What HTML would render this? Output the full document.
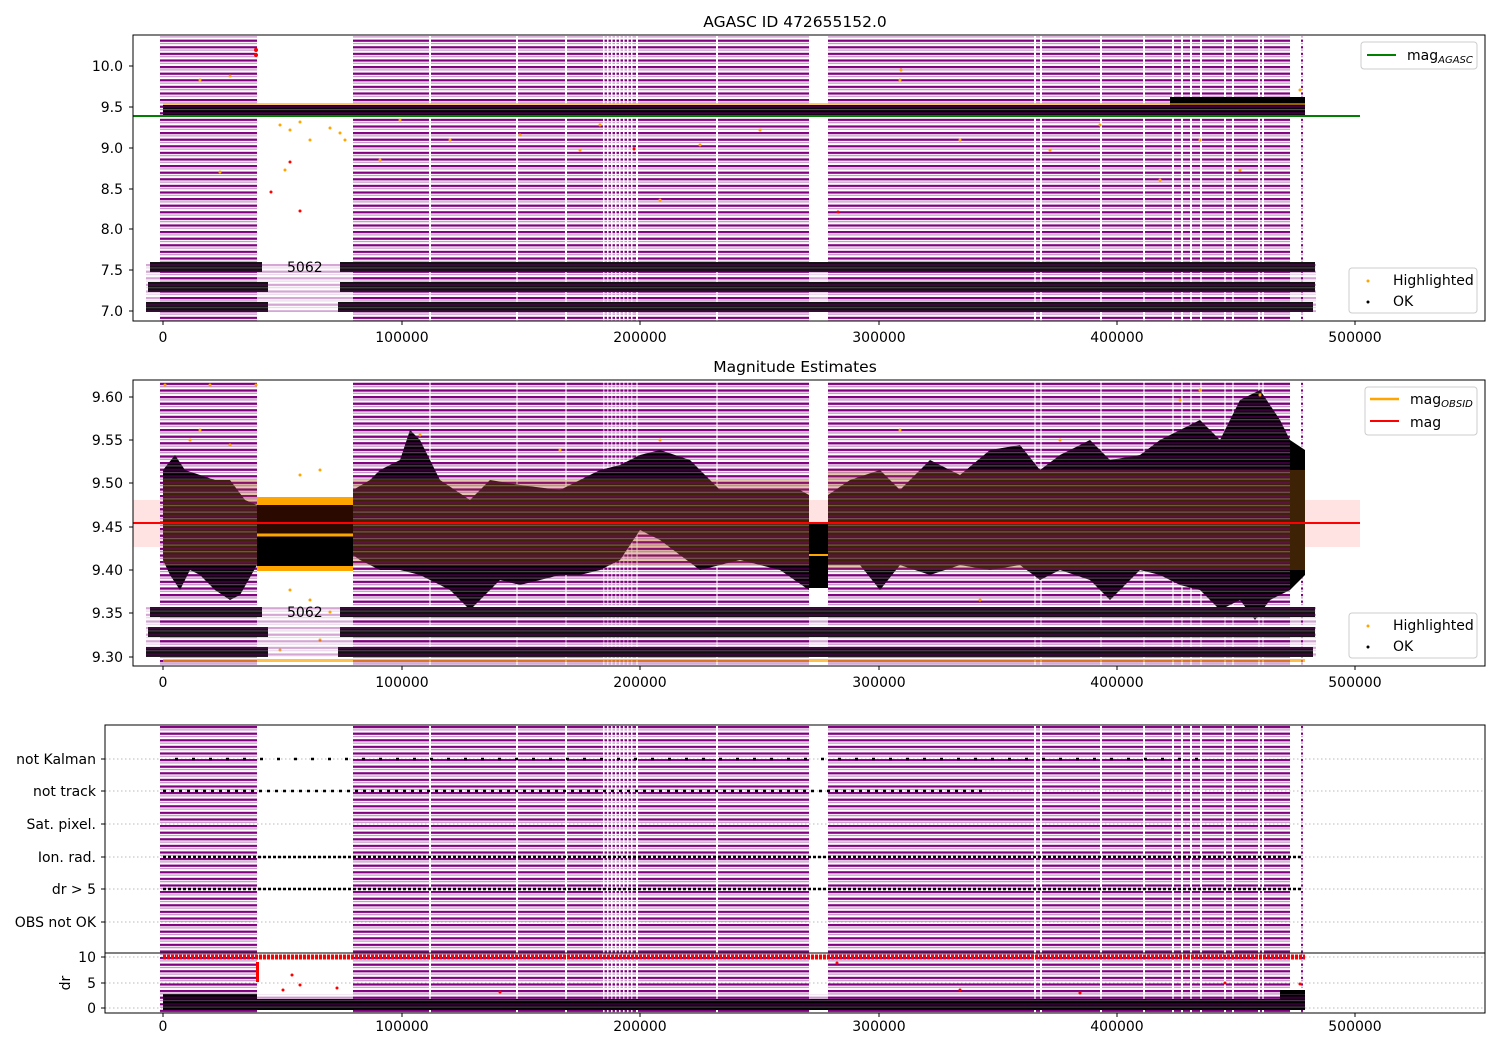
<!DOCTYPE html>
<html><head><meta charset="utf-8"><style>
html,body{margin:0;padding:0;background:#fff;}
svg{display:block;font-family:"DejaVu Sans","Liberation Sans",sans-serif;}
</style></head><body>
<svg width="1500" height="1050" viewBox="0 0 1500 1050" xmlns="http://www.w3.org/2000/svg">
<defs>
<pattern id="st" x="0" y="0" width="8" height="6.6" patternUnits="userSpaceOnUse">
<rect x="0" y="0" width="8" height="2.2" fill="#800080"/>
<rect x="0" y="3.3" width="8" height="1.2" fill="#c690c6"/>
</pattern>
<g id="gaps" fill="#fff">
<rect x="429" width="2" height="300"/><rect x="516" width="2" height="300"/><rect x="565" width="2" height="300"/>
<rect x="603" width="1.5" height="300"/><rect x="607" width="1.5" height="300"/><rect x="611" width="1.5" height="300"/><rect x="615" width="1.5" height="300"/><rect x="619" width="1.5" height="300"/><rect x="623" width="1.5" height="300"/><rect x="627" width="1.5" height="300"/><rect x="631" width="1.5" height="300"/>
<rect x="636" width="2" height="300"/><rect x="716" width="2" height="300"/><rect x="1034" width="2" height="300"/><rect x="1040" width="2" height="300"/><rect x="1100" width="2" height="300"/><rect x="1143" width="2" height="300"/><rect x="1172" width="2" height="300"/><rect x="1181" width="2" height="300"/><rect x="1190" width="2" height="300"/><rect x="1200" width="2" height="300"/><rect x="1224" width="2" height="300"/><rect x="1232" width="2" height="300"/><rect x="1258" width="2" height="300"/><rect x="1262" width="2" height="300"/>
</g>
</defs>

<!-- ============ PANEL 1 ============ -->
<text x="795" y="27" font-size="15.5" text-anchor="middle">AGASC ID 472655152.0</text>
<rect x="160" y="36" width="97" height="285" fill="url(#st)"/>
<rect x="353" y="36" width="456" height="285" fill="url(#st)"/>
<rect x="828" y="36" width="462" height="285" fill="url(#st)"/>
<rect x="1301" y="36" width="2" height="285" fill="url(#st)"/>
<use href="#gaps" y="36" transform="translate(0,0)" />
<!-- data top -->
<rect x="163" y="105" width="1142" height="10" fill="#000"/>
<rect x="1170" y="97" width="135" height="18" fill="#000"/>
<rect x="163" y="103" width="1142" height="2" fill="#ffa500" opacity="0.6"/>
<rect x="163" y="104" width="1142" height="12" fill="url(#st)" opacity="0.5"/>
<g fill="#ffa500">
<circle cx="200" cy="80" r="1.5"/><circle cx="230" cy="76" r="1.5"/><circle cx="280" cy="125" r="1.5"/><circle cx="290" cy="130" r="1.5"/><circle cx="300" cy="122" r="1.5"/>
<circle cx="310" cy="140" r="1.5"/><circle cx="285" cy="170" r="1.5"/><circle cx="330" cy="128" r="1.5"/><circle cx="340" cy="133" r="1.5"/><circle cx="345" cy="140" r="1.5"/>
<circle cx="380" cy="160" r="1.5"/><circle cx="450" cy="140" r="1.5"/><circle cx="520" cy="135" r="1.5"/><circle cx="580" cy="150" r="1.5"/><circle cx="600" cy="125" r="1.5"/>
<circle cx="660" cy="200" r="1.5"/><circle cx="700" cy="145" r="1.5"/><circle cx="760" cy="130" r="1.5"/><circle cx="900" cy="80" r="1.5"/><circle cx="901" cy="70" r="1.5"/>
<circle cx="960" cy="140" r="1.5"/><circle cx="1050" cy="150" r="1.5"/><circle cx="1100" cy="125" r="1.5"/><circle cx="1160" cy="180" r="1.5"/><circle cx="1200" cy="140" r="1.5"/><circle cx="1240" cy="170" r="1.5"/>
<circle cx="220" cy="172" r="1.5"/><circle cx="400" cy="120" r="1.5"/><circle cx="1300" cy="90" r="1.5"/>
</g>
<g fill="#f00">
<circle cx="256" cy="50" r="2"/><circle cx="256" cy="55" r="2"/><circle cx="271" cy="192" r="1.5"/><circle cx="290" cy="162" r="1.5"/><circle cx="300" cy="211" r="1.5"/><circle cx="838" cy="212" r="1.5"/><circle cx="634" cy="149" r="1.5"/>
</g>
<line x1="133" y1="116" x2="1360" y2="116" stroke="#008000" stroke-width="2"/>
<g fill="#111">
<rect x="150" y="262" width="112" height="10"/><rect x="340" y="262" width="975" height="10"/>
<rect x="148" y="282" width="120" height="10"/><rect x="340" y="282" width="975" height="10"/>
<rect x="146" y="302" width="122" height="10"/><rect x="338" y="302" width="975" height="10"/>
</g>
<rect x="146" y="262" width="1170" height="50" fill="url(#st)" opacity="0.35"/>
<text x="287" y="272" font-size="14">5062</text>
<rect x="133" y="35" width="1352" height="286" fill="none" stroke="#000" stroke-width="1"/>
<g font-size="14" text-anchor="end">
<text x="123" y="71">10.0</text><text x="123" y="112">9.5</text><text x="123" y="153">9.0</text><text x="123" y="194">8.5</text><text x="123" y="234">8.0</text><text x="123" y="275">7.5</text><text x="123" y="316">7.0</text>
</g>
<g stroke="#000"><line x1="129" y1="66" x2="133" y2="66"/><line x1="129" y1="107" x2="133" y2="107"/><line x1="129" y1="148" x2="133" y2="148"/><line x1="129" y1="189" x2="133" y2="189"/><line x1="129" y1="229" x2="133" y2="229"/><line x1="129" y1="270" x2="133" y2="270"/><line x1="129" y1="311" x2="133" y2="311"/></g>
<g font-size="14" text-anchor="middle">
<text x="163" y="342">0</text><text x="402" y="342">100000</text><text x="640" y="342">200000</text><text x="879" y="342">300000</text><text x="1117" y="342">400000</text><text x="1355" y="342">500000</text>
</g>
<g stroke="#000"><line x1="163" y1="321" x2="163" y2="325"/><line x1="402" y1="321" x2="402" y2="325"/><line x1="640" y1="321" x2="640" y2="325"/><line x1="879" y1="321" x2="879" y2="325"/><line x1="1117" y1="321" x2="1117" y2="325"/><line x1="1355" y1="321" x2="1355" y2="325"/></g>
<rect x="1361" y="42" width="116" height="27" rx="3" fill="#fff" fill-opacity="0.85" stroke="#ccc"/>
<line x1="1367" y1="55" x2="1396" y2="55" stroke="#008000" stroke-width="2"/>
<text x="1407" y="60" font-size="14">mag<tspan font-size="10" font-style="italic" dy="3">AGASC</tspan></text>
<rect x="1349" y="268" width="128" height="45" rx="3" fill="#fff" fill-opacity="0.85" stroke="#ccc"/>
<circle cx="1368" cy="281" r="1.5" fill="#ffa500"/><text x="1393" y="285" font-size="14">Highlighted</text>
<circle cx="1368" cy="302" r="1.5" fill="#000"/><text x="1393" y="306" font-size="14">OK</text>

<!-- ============ PANEL 2 ============ -->
<text x="795" y="372" font-size="15.5" text-anchor="middle">Magnitude Estimates</text>
<rect x="133" y="500" width="1227" height="47" fill="#ffd5d5" opacity="0.7"/>
<rect x="160" y="381" width="97" height="285" fill="url(#st)"/>
<rect x="353" y="381" width="456" height="285" fill="url(#st)"/>
<rect x="828" y="381" width="462" height="285" fill="url(#st)"/>
<rect x="1301" y="381" width="2" height="285" fill="url(#st)"/>
<use href="#gaps" y="381"/>
<polygon fill="#000" points="163,470 175,455 185,470 200,475 215,480 230,480 245,500 257,505 257,565 240,595 230,600 215,590 200,575 190,570 180,590 170,575 163,560"/>
<rect x="257" y="505" width="96" height="62" fill="#000"/>
<rect x="257" y="505" width="96" height="30" fill="#2a0a00"/>
<rect x="257" y="497" width="96" height="8" fill="#ffa500"/>
<rect x="257" y="566" width="96" height="5" fill="#ffa500"/>
<line x1="257" y1="535" x2="353" y2="535" stroke="#ffa500" stroke-width="3"/>
<polygon fill="#000" points="353,490 370,480 380,470 400,460 410,430 420,440 440,480 470,500 490,480 520,485 560,490 600,470 620,465 640,455 660,450 690,460 720,490 760,490 800,490 809,495 809,590 780,570 740,560 700,570 680,555 660,540 640,530 620,560 600,570 580,575 560,575 540,580 520,585 500,580 480,600 470,610 450,590 420,575 400,570 380,570 360,560 353,555"/>
<rect x="809" y="522" width="19" height="66" fill="#000"/>
<line x1="809" y1="555" x2="828" y2="555" stroke="#ffa500" stroke-width="2"/>
<polygon fill="#000" points="828,495 850,480 880,470 900,490 930,460 960,475 990,450 1020,445 1040,470 1060,455 1090,440 1110,460 1140,455 1160,440 1180,430 1200,420 1220,440 1240,400 1260,390 1280,420 1290,440 1305,450 1305,575 1290,590 1270,600 1255,620 1240,600 1220,610 1200,590 1180,585 1160,575 1140,570 1110,600 1090,580 1060,570 1040,580 1020,565 990,570 960,565 930,575 900,565 880,590 860,565 828,565"/>
<rect x="163" y="480" width="94" height="85" fill="#b06010" opacity="0.35"/>
<rect x="353" y="480" width="456" height="85" fill="#b06010" opacity="0.35"/>
<rect x="828" y="470" width="477" height="100" fill="#b06010" opacity="0.35"/>
<rect x="160" y="381" width="97" height="285" fill="url(#st)" opacity="0.45"/>
<rect x="353" y="381" width="456" height="285" fill="url(#st)" opacity="0.45"/>
<rect x="828" y="381" width="462" height="285" fill="url(#st)" opacity="0.45"/>
<g fill="#ffa500">
<circle cx="200" cy="430" r="1.5"/><circle cx="190" cy="440" r="1.5"/><circle cx="230" cy="445" r="1.5"/><circle cx="300" cy="475" r="1.5"/><circle cx="320" cy="470" r="1.5"/><circle cx="290" cy="590" r="1.5"/>
<circle cx="310" cy="600" r="1.5"/><circle cx="330" cy="612" r="1.5"/><circle cx="280" cy="650" r="1.5"/><circle cx="320" cy="640" r="1.5"/><circle cx="420" cy="435" r="1.5"/><circle cx="560" cy="450" r="1.5"/>
<circle cx="660" cy="440" r="1.5"/><circle cx="900" cy="430" r="1.5"/><circle cx="1060" cy="440" r="1.5"/><circle cx="1180" cy="400" r="1.5"/><circle cx="1200" cy="390" r="1.5"/><circle cx="1260" cy="395" r="1.5"/>
<circle cx="1240" cy="610" r="1.5"/><circle cx="1100" cy="610" r="1.5"/><circle cx="980" cy="600" r="1.5"/><circle cx="700" cy="610" r="1.5"/><circle cx="165" cy="385" r="1.5"/><circle cx="210" cy="385" r="1.5"/><circle cx="256" cy="385" r="1.5"/>
</g>
<rect x="163" y="659" width="1142" height="3" fill="#ffa500" opacity="0.7"/>
<line x1="133" y1="523" x2="1360" y2="523" stroke="#f00" stroke-width="2"/>
<g fill="#111">
<rect x="150" y="607" width="112" height="10"/><rect x="340" y="607" width="975" height="10"/>
<rect x="148" y="627" width="120" height="10"/><rect x="340" y="627" width="975" height="10"/>
<rect x="146" y="647" width="122" height="10"/><rect x="338" y="647" width="975" height="10"/>
</g>
<rect x="146" y="607" width="1170" height="50" fill="url(#st)" opacity="0.35"/>
<text x="287" y="617" font-size="14">5062</text>
<rect x="133" y="380" width="1352" height="286" fill="none" stroke="#000"/>
<g font-size="14" text-anchor="end">
<text x="123" y="402">9.60</text><text x="123" y="445">9.55</text><text x="123" y="488">9.50</text><text x="123" y="532">9.45</text><text x="123" y="575">9.40</text><text x="123" y="618">9.35</text><text x="123" y="662">9.30</text>
</g>
<g stroke="#000"><line x1="129" y1="397" x2="133" y2="397"/><line x1="129" y1="440" x2="133" y2="440"/><line x1="129" y1="483" x2="133" y2="483"/><line x1="129" y1="527" x2="133" y2="527"/><line x1="129" y1="570" x2="133" y2="570"/><line x1="129" y1="613" x2="133" y2="613"/><line x1="129" y1="657" x2="133" y2="657"/></g>
<g font-size="14" text-anchor="middle">
<text x="163" y="687">0</text><text x="402" y="687">100000</text><text x="640" y="687">200000</text><text x="879" y="687">300000</text><text x="1117" y="687">400000</text><text x="1355" y="687">500000</text>
</g>
<g stroke="#000"><line x1="163" y1="666" x2="163" y2="670"/><line x1="402" y1="666" x2="402" y2="670"/><line x1="640" y1="666" x2="640" y2="670"/><line x1="879" y1="666" x2="879" y2="670"/><line x1="1117" y1="666" x2="1117" y2="670"/><line x1="1355" y1="666" x2="1355" y2="670"/></g>
<rect x="1365" y="387" width="112" height="48" rx="3" fill="#fff" fill-opacity="0.85" stroke="#ccc"/>
<line x1="1370" y1="399" x2="1399" y2="399" stroke="#ffa500" stroke-width="2.5"/>
<text x="1410" y="404" font-size="14">mag<tspan font-size="10" font-style="italic" dy="3">OBSID</tspan></text>
<line x1="1370" y1="421" x2="1399" y2="421" stroke="#f00" stroke-width="2"/>
<text x="1410" y="427" font-size="14">mag</text>
<rect x="1349" y="613" width="128" height="45" rx="3" fill="#fff" fill-opacity="0.85" stroke="#ccc"/>
<circle cx="1368" cy="626" r="1.5" fill="#ffa500"/><text x="1393" y="630" font-size="14">Highlighted</text>
<circle cx="1368" cy="647" r="1.5" fill="#000"/><text x="1393" y="651" font-size="14">OK</text>

<!-- ============ PANEL 3 ============ -->
<g stroke="#bbb" stroke-dasharray="1.5,2.5" stroke-width="1">
<line x1="105" y1="759" x2="1485" y2="759"/><line x1="105" y1="791" x2="1485" y2="791"/><line x1="105" y1="824" x2="1485" y2="824"/><line x1="105" y1="857" x2="1485" y2="857"/><line x1="105" y1="889" x2="1485" y2="889"/><line x1="105" y1="922" x2="1485" y2="922"/>
<line x1="105" y1="957" x2="1485" y2="957"/><line x1="105" y1="983" x2="1485" y2="983"/><line x1="105" y1="1008" x2="1485" y2="1008"/>
</g>
<rect x="160" y="726" width="97" height="287" fill="url(#st)"/>
<rect x="353" y="726" width="456" height="287" fill="url(#st)"/>
<rect x="828" y="726" width="462" height="287" fill="url(#st)"/>
<rect x="1301" y="726" width="2" height="287" fill="url(#st)"/>
<use href="#gaps" y="726"/>
<g stroke="#000" stroke-width="2.5" stroke-dasharray="3,2">
<line x1="175" y1="759" x2="1200" y2="759" stroke-dasharray="3,14"/>
<line x1="163" y1="791" x2="985" y2="791" stroke-dasharray="3,5"/>
<line x1="163" y1="857" x2="1303" y2="857"/>
<line x1="163" y1="889" x2="1303" y2="889"/>
</g>
<line x1="163" y1="957" x2="1305" y2="957" stroke="#f00" stroke-width="5" stroke-dasharray="3,1"/>
<rect x="163" y="999" width="1142" height="11" fill="#000"/>
<g fill="#000"><rect x="163" y="994" width="94" height="6"/><rect x="1280" y="990" width="25" height="10"/></g>
<rect x="163" y="994" width="1142" height="16" fill="url(#st)" opacity="0.4"/>
<g fill="#f00">
<rect x="256" y="962" width="3" height="20"/><circle cx="292" cy="975" r="1.5"/><circle cx="283" cy="990" r="1.5"/><circle cx="300" cy="985" r="1.5"/><circle cx="337" cy="988" r="1.5"/>
<circle cx="837" cy="963" r="1.5"/><circle cx="1225" cy="983" r="1.5"/><circle cx="1300" cy="984" r="1.5"/><circle cx="960" cy="990" r="1.5"/><circle cx="1080" cy="993" r="1.5"/><circle cx="500" cy="992" r="1.5"/>
</g>
<line x1="105" y1="953" x2="1485" y2="953" stroke="#000"/>
<rect x="105" y="725" width="1380" height="288" fill="none" stroke="#000"/>
<g font-size="14" text-anchor="end">
<text x="96" y="764">not Kalman</text><text x="96" y="796">not track</text><text x="96" y="829">Sat. pixel.</text><text x="96" y="862">Ion. rad.</text><text x="96" y="894">dr &gt; 5</text><text x="96" y="927">OBS not OK</text>
<text x="96" y="962">10</text><text x="96" y="988">5</text><text x="96" y="1013">0</text>
</g>
<g stroke="#000">
<line x1="101" y1="759" x2="105" y2="759"/><line x1="101" y1="791" x2="105" y2="791"/><line x1="101" y1="824" x2="105" y2="824"/><line x1="101" y1="857" x2="105" y2="857"/><line x1="101" y1="889" x2="105" y2="889"/><line x1="101" y1="922" x2="105" y2="922"/>
<line x1="101" y1="957" x2="105" y2="957"/><line x1="101" y1="983" x2="105" y2="983"/><line x1="101" y1="1008" x2="105" y2="1008"/>
</g>
<text x="70" y="983" font-size="14" text-anchor="middle" transform="rotate(-90 70 983)">dr</text>
<g font-size="14" text-anchor="middle">
<text x="163" y="1031">0</text><text x="402" y="1031">100000</text><text x="640" y="1031">200000</text><text x="879" y="1031">300000</text><text x="1117" y="1031">400000</text><text x="1355" y="1031">500000</text>
</g>
<g stroke="#000"><line x1="163" y1="1013" x2="163" y2="1017"/><line x1="402" y1="1013" x2="402" y2="1017"/><line x1="640" y1="1013" x2="640" y2="1017"/><line x1="879" y1="1013" x2="879" y2="1017"/><line x1="1117" y1="1013" x2="1117" y2="1017"/><line x1="1355" y1="1013" x2="1355" y2="1017"/></g>
</svg>
</body></html>
